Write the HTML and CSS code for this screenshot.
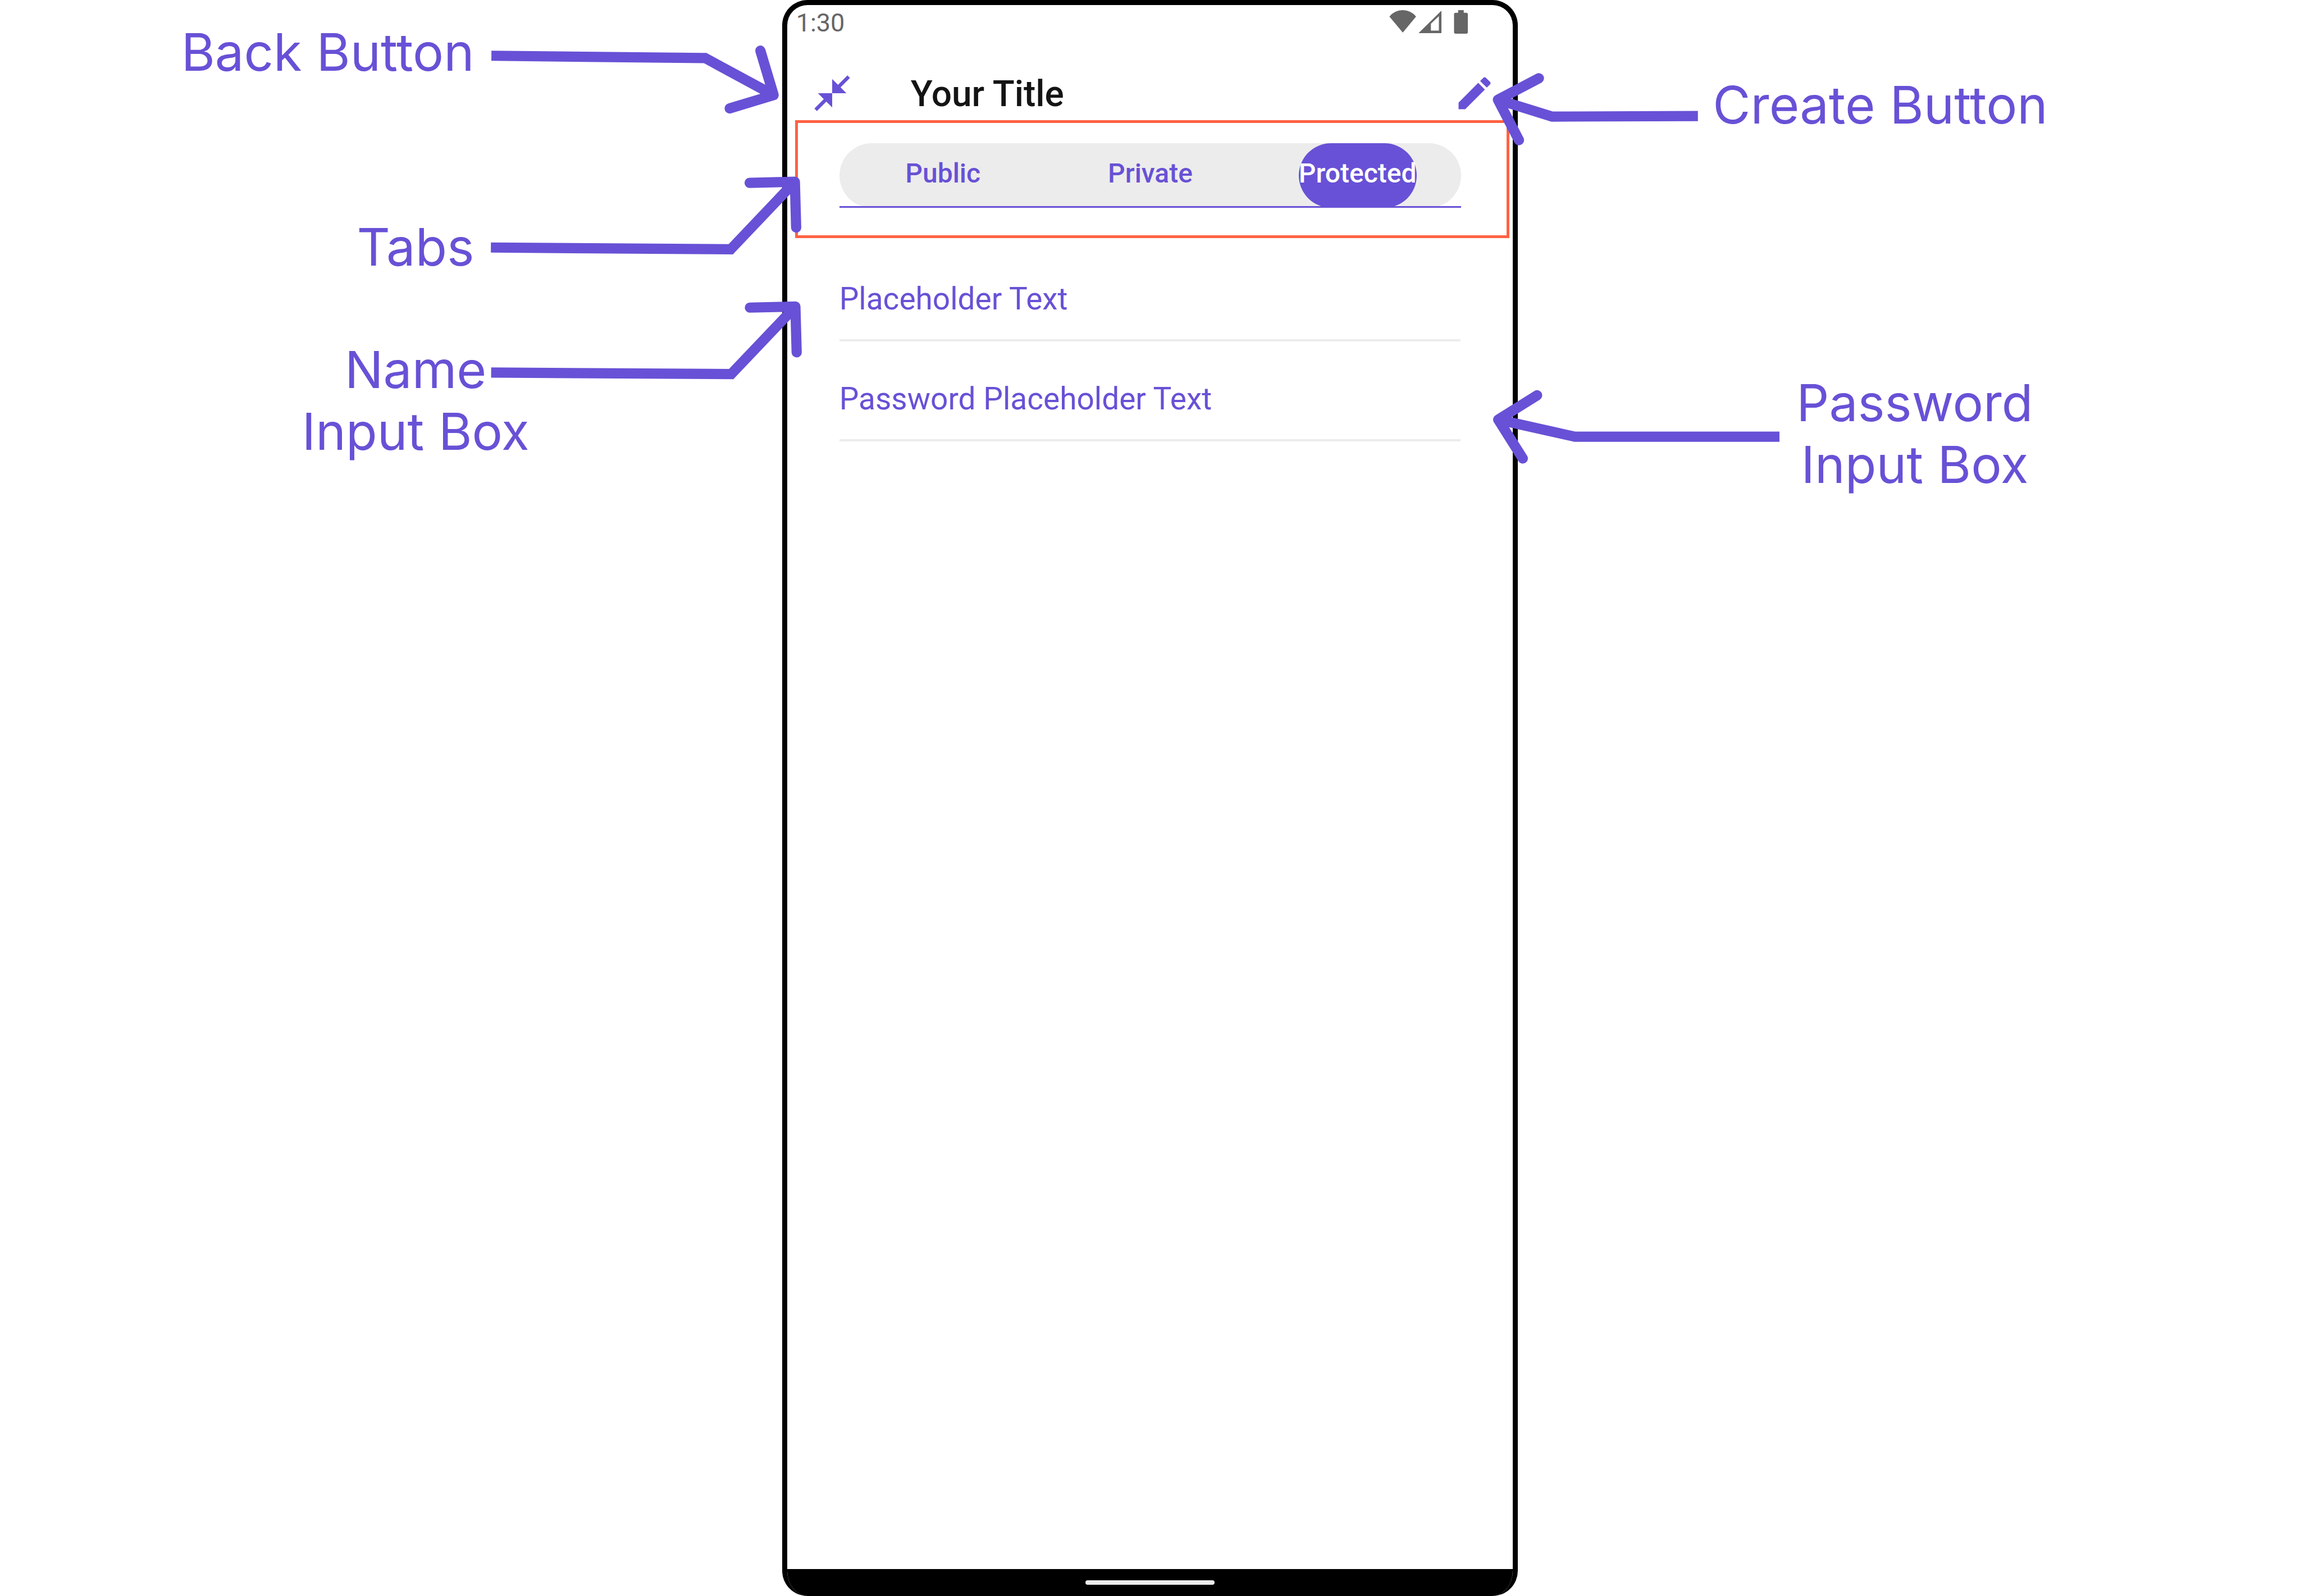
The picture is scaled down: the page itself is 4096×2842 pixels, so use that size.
FILE: index.html
```html
<!DOCTYPE html>
<html lang="en">
<head>
<meta charset="utf-8">
<meta name="viewport" content="width=device-width, initial-scale=1">
<title>Create Group</title>
<link rel="stylesheet" href="styles.css">
</head>
<body>
<main class="stage">
  <aside class="notes notes-left">
    <p class="note note-single note-back">Back Button</p>
    <p class="note note-single note-tabs">Tabs</p>
    <p class="note note-name">Name<br>Input Box</p>
  </aside>

  <section class="phone">
    <div class="status-bar">
      <span class="clock">1:30</span>
      <svg class="status-icons" viewBox="2717 19 154 46" aria-hidden="true">
        <path d="M2717.4 31.5A33.5 33.5 0 0 1 2769.6 31.5L2743.6 63Z"/>
        <path fill-rule="evenodd" d="M2774.5 64H2819.3V20ZM2798.7 45.7L2814.3 30.7V59H2798.7Z"/>
        <path d="M2852 19h11v5h5a3 3 0 0 1 3 3v35a3 3 0 0 1-3 3h-21a3 3 0 0 1-3-3v-35a3 3 0 0 1 3-3h5z"/>
      </svg>
    </div>

    <header class="app-bar">
      <button class="icon-button" type="button" aria-label="Back">
        <svg class="icon" viewBox="0 0 24 24" aria-hidden="true"><path d="M22 3.41L16.71 8.7 20 12h-8V4l3.29 3.29L20.59 2 22 3.41zM3.41 22l5.29-5.29L12 20v-8H4l3.29 3.29L2 20.59 3.41 22z"/></svg>
      </button>
      <h1 class="title">Your Title</h1>
      <button class="icon-button" type="button" aria-label="Create">
        <svg class="icon" viewBox="0 0 24 24" aria-hidden="true"><path d="M3 17.25V21h3.75L17.81 9.94l-3.75-3.75L3 17.25zM20.71 7.04c.39-.39.39-1.02 0-1.41l-2.34-2.34c-.39-.39-1.02-.39-1.41 0l-1.83 1.83 3.75 3.75 1.83-1.83z"/></svg>
      </button>
    </header>

    <div class="tabs-frame">
      <div class="tabs" role="tablist">
        <button class="tab" type="button" role="tab" aria-selected="false">Public</button>
        <button class="tab" type="button" role="tab" aria-selected="false">Private</button>
        <button class="tab tab-selected" type="button" role="tab" aria-selected="true">Protected</button>
      </div>
    </div>

    <form class="fields">
      <input class="field" type="text" aria-label="Name" placeholder="Placeholder Text">
      <input class="field" type="password" aria-label="Password" placeholder="Password Placeholder Text">
    </form>

    <div class="nav-bar"><span class="nav-handle"></span></div>
  </section>

  <aside class="notes notes-right">
    <p class="note note-single note-create">Create Button</p>
    <p class="note note-password">Password<br>Input Box</p>
  </aside>

  <svg class="arrows" viewBox="0 0 4498 3121" aria-hidden="true">
    <path d="M961 109L1379 113.5L1513 186"/>
    <path class="head" d="M1487 99L1513 186L1427 212"/>
    <path d="M960 484L1429 487.5L1554.5 355.5"/>
    <path class="head" d="M1466 357.5L1554.5 355.5L1557 445"/>
    <path d="M960.5 728.5L1430 731.5L1555.5 599.5"/>
    <path class="head" d="M1466.5 601.5L1555.5 599.5L1558 689"/>
    <path d="M3320.5 227L3035.5 228L2929.5 195"/>
    <path class="head" d="M3009.5 153L2929.5 195L2970.5 274"/>
    <path d="M3480 854H3080L2930 820.5"/>
    <path class="head" d="M3006 773L2930 820.5L2978 896.5"/>
  </svg>
</main>
</body>
</html>
```

FILE: styles.css
```css
:root {
  --accent: #6851d6;
  --muted: #ececec;
}

* {
  box-sizing: border-box;
}

body {
  margin: 0;
  background: #fff;
  font-family: Roboto, "Liberation Sans", sans-serif;
}

button {
  border: 0;
  padding: 0;
  background: none;
  font: inherit;
  color: inherit;
}

.stage {
  position: relative;
  display: grid;
  grid-template-columns: 34% 32% 34%;
  min-height: 100vh;
}

/* Callout labels on both sides of the phone */
.notes {
  display: flex;
  flex-direction: column;
}

.notes-left {
  align-items: flex-end;
  padding-top: 38px;
}

.notes-right {
  align-items: flex-start;
  padding-top: 132px;
}

.note {
  margin: 0;
  font-family: Inter, "Liberation Sans", sans-serif;
  font-size: 91px;
  line-height: 110px;
  text-align: center;
  color: var(--accent);
}

.note-single {
  font-size: 92px;
}

.note-back,
.note-tabs {
  margin-right: 548px;
}

.note-tabs {
  margin-top: 237px;
}

.note-name {
  margin-top: 108px;
  margin-right: 450px;
}

.note-create {
  margin-left: 347px;
}

.note-password {
  margin-top: 420px;
  margin-left: 496px;
}

/* Phone */
.phone {
  display: flex;
  flex-direction: column;
  overflow: hidden;
  border: 9px solid #000;
  border-bottom: 0;
  border-radius: 45px;
  background: #fff;
}

.status-bar {
  display: flex;
  align-items: center;
  justify-content: space-between;
  height: 60px;
  padding: 0 80px 0 16px;
}

.clock {
  padding-top: 4px;
  font-size: 45px;
  line-height: 52px;
  color: #666;
}

.status-icons {
  width: 140px;
  height: 42px;
  fill: #666;
}

.app-bar {
  display: flex;
  align-items: center;
  height: 145px;
  padding: 49px 30px 0 42px;
}

.icon-button {
  display: flex;
}

.icon {
  width: 76px;
  height: 76px;
  fill: var(--accent);
}

.title {
  flex: 1;
  margin: 0 0 0 102px;
  padding-top: 4px;
  font-size: 64px;
  font-weight: 500;
  line-height: 76px;
  color: #141414;
}

.tabs-frame {
  margin: 0 6px 0 14px;
  border: 5px solid #ff6243;
  padding: 36px 81px 49px 74px;
}

.tabs {
  position: relative;
  display: grid;
  grid-template-columns: repeat(3, 1fr);
  justify-items: center;
  height: 115px;
  border-radius: 58px;
  background: var(--muted);
}

/* Rule along the bottom edge of the tab strip */
.tabs::after {
  content: "";
  position: absolute;
  right: 0;
  bottom: 0;
  left: 0;
  height: 3px;
  background: var(--accent);
}

.tab {
  padding-bottom: 8px;
  border-radius: 58px;
  font-size: 48px;
  font-weight: 500;
  color: var(--accent);
}

.tab-selected {
  background: var(--accent);
  color: #fff;
}

.fields {
  display: flex;
  flex: 1;
  flex-direction: column;
  padding: 6px 93px 0;
}

.field {
  width: 100%;
  height: 178px;
  border: 0;
  border-bottom: 4px solid var(--muted);
  border-radius: 0;
  padding: 60px 0 30px;
  background: none;
  font-family: inherit;
  font-size: 55px;
  color: var(--accent);
}

.field::placeholder {
  color: var(--accent);
  opacity: 1;
}

.nav-bar {
  display: flex;
  align-items: center;
  justify-content: center;
  height: 48px;
  background: #000;
}

.nav-handle {
  width: 230px;
  height: 8px;
  border-radius: 4px;
  background: #ecebeb;
}

/* Arrows drawn over the page, from each label to its control */
.arrows {
  position: absolute;
  top: 0;
  left: 0;
  width: 100%;
  pointer-events: none;
  fill: none;
  stroke: var(--accent);
  stroke-width: 20;
}

.head {
  stroke-linecap: round;
  stroke-linejoin: round;
}
```
